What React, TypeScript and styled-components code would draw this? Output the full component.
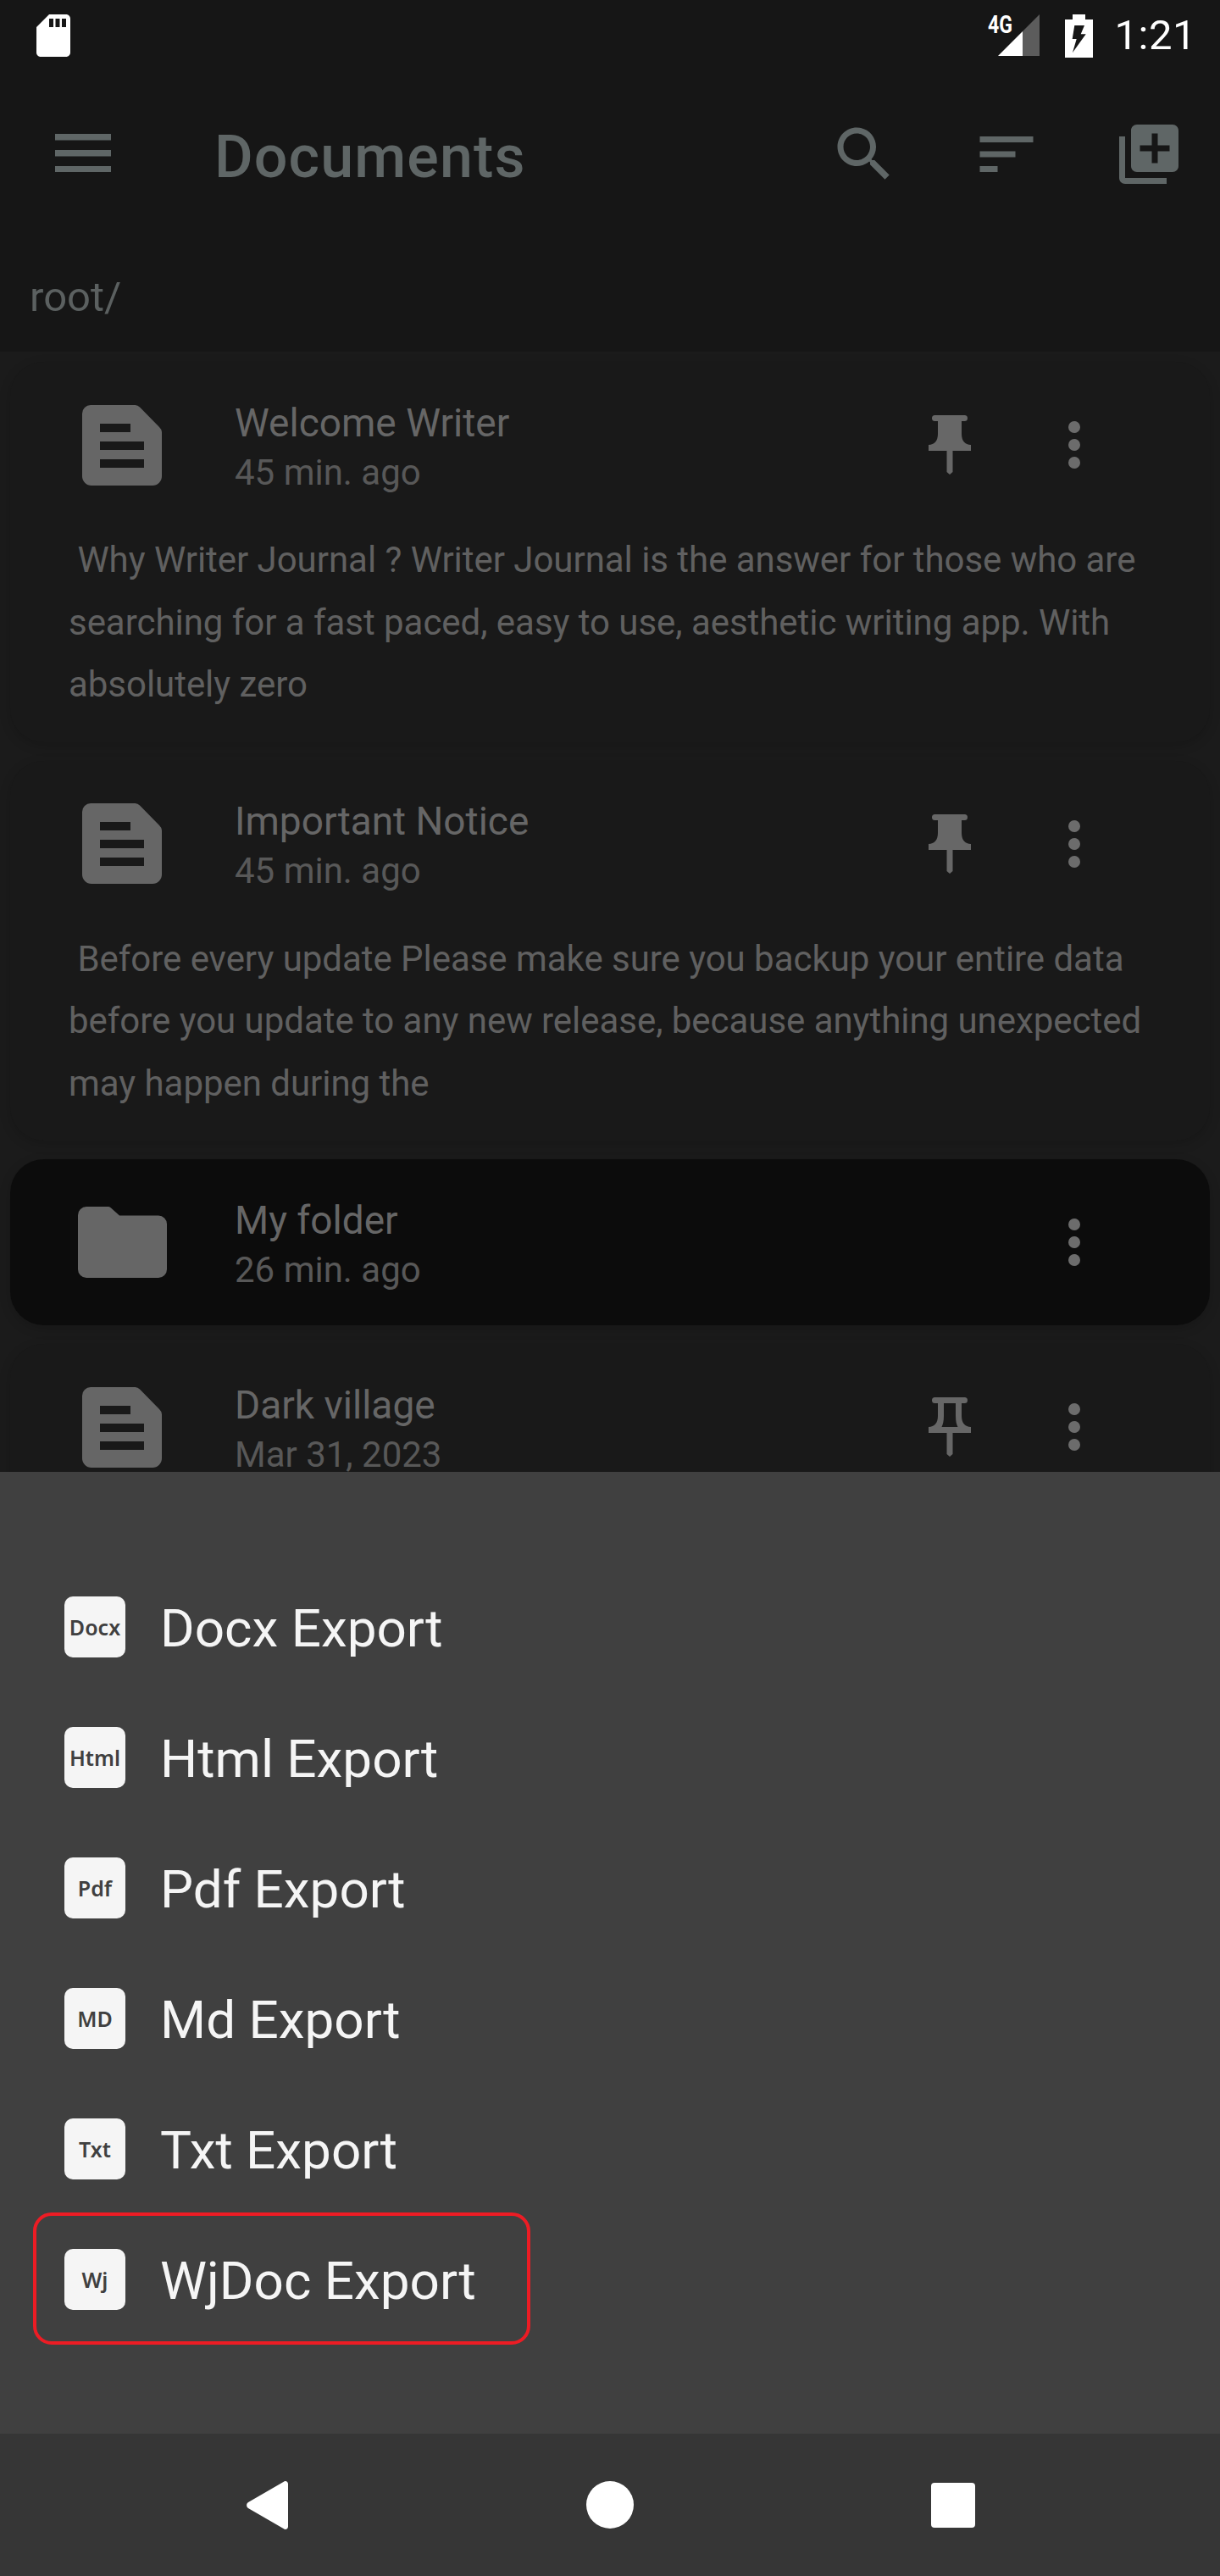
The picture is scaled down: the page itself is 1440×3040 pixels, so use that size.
import React from "react";
import styled, { createGlobalStyle } from "styled-components";

const Global = createGlobalStyle`
  html, body { margin: 0; padding: 0; background: #161616; }
  * { box-sizing: border-box; }
`;

const Phone = styled.div`
  width: 1440px;
  height: 3040px;
  display: flex;
  flex-direction: column;
  overflow: hidden;
  background: #161616;
  font-family: Roboto, "Liberation Sans", sans-serif;
`;

const StatusBar = styled.div`
  height: 84px;
  flex: none;
  display: flex;
  align-items: center;
  padding: 0 28px 0 33px;
  color: #fff;
`;
const StatusRight = styled.div`
  margin-left: auto;
  display: flex;
  align-items: center;
`;
const SignalIcon = styled.svg`
  display: block;
  overflow: visible;
  margin: -1px 30px 0 0;
`;
const BatteryIcon = styled.svg`
  display: block;
  margin-right: 26px;
`;
const Clock = styled.span`
  font-size: 49px;
  line-height: 84px;
  letter-spacing: 0.5px;
`;

const Toolbar = styled.div`
  height: 196px;
  flex: none;
  display: flex;
  align-items: center;
  color: #5f6666;
`;
const Burger = styled.svg`
  display: block;
  margin: -3px 0 0 65px;
`;
const Title = styled.h1`
  margin: 6px 0 0 122px;
  font-size: 70px;
  font-weight: 500;
  line-height: 84px;
  letter-spacing: 1.1px;
`;
const ToolActions = styled.div`
  margin-left: auto;
  display: flex;
`;
const ToolSlot = styled.div`
  width: 168px;
  height: 84px;
  display: flex;
  align-items: center;
  justify-content: center;
`;

const Breadcrumb = styled.div`
  height: 135px;
  flex: none;
  padding: 42px 0 0 35px;
  font-size: 49px;
  line-height: 58px;
  color: #5b6060;
`;

const List = styled.div`
  flex: 1;
  min-height: 0;
  overflow: hidden;
  background: #1b1b1b;
  padding: 12px 12px 0;
  display: flex;
  flex-direction: column;
  gap: 22px;
`;
const Card = styled.div<{ $folder?: boolean }>`
  flex: none;
  border-radius: 40px;
  background: ${(p) => (p.$folder ? "#0c0c0c" : "#191919")};
  box-shadow: 0 4px 14px rgba(0, 0, 0, 0.16);
  color: #636363;
`;
const CardHead = styled.div`
  height: 196px;
  display: flex;
  align-items: center;
  padding-right: 87px;
`;
const KindSlot = styled.div`
  width: 265px;
  padding-right: 1px;
  flex: none;
  display: flex;
  justify-content: center;
`;
const CardText = styled.div`
  flex: 1;
  min-width: 0;
  padding-top: 5px;
`;
const CardTitle = styled.div`
  font-size: 46px;
  line-height: 60px;
  color: #666;
`;
const CardTime = styled.div`
  font-size: 42px;
  line-height: 58px;
  color: #585858;
`;
const ActionSlot = styled.div`
  width: 147px;
  flex: none;
  display: flex;
  justify-content: center;
`;
const CardBody = styled.p`
  margin: 0;
  padding: 1px 70px 31px 69px;
  font-size: 42px;
  line-height: 73.5px;
  letter-spacing: -0.04px;
  white-space: pre-wrap;
  color: #606060;
`;

const Sheet = styled.div`
  flex: none;
  height: 1135px;
  background: #404040;
  padding: 106px 0 105px;
  display: flex;
  flex-direction: column;
`;
const ExportRow = styled.div<{ $marked?: boolean }>`
  position: relative;
  height: 154px;
  padding-left: 76px;
  display: flex;
  align-items: center;
  gap: 41px;
  ${(p) =>
    p.$marked &&
    `&::after {
      content: "";
      box-sizing: border-box;
      position: absolute;
      left: 39px;
      top: -2px;
      width: 587px;
      height: 156px;
      border: 4.5px solid #ed1c24;
      border-radius: 22px;
    }`}
`;
const ExportBadge = styled.span`
  width: 72px;
  height: 72px;
  flex: none;
  display: flex;
  align-items: center;
  justify-content: center;
  border-radius: 10px;
  background: #f5f5f5;
  color: #404040;
  font-family: "Noto Sans", "Open Sans", sans-serif;
  font-size: 25px;
  font-weight: 600;
`;
const ExportLabel = styled.span`
  margin-top: 3px;
  font-size: 62px;
  line-height: 74px;
  color: #f5f5f5;
`;

const NavBar = styled.div`
  flex: none;
  height: 168px;
  background: #363636;
  display: flex;
  align-items: center;
  justify-content: center;
`;
const NavSlot = styled.div`
  width: 405px;
  display: flex;
  justify-content: center;
`;

const Icon = styled.svg`
  display: block;
  fill: currentColor;
`;

const DocIcon = () => (
  <Icon width="94" height="95" viewBox="0 0 94 95" fill="#666" style={{ color: "#666" }}>
    <path
      fillRule="evenodd"
      d="M10 0H62a8 8 0 0 1 6 2.500L91 26a9 9 0 0 1 3 6V84a11 11 0 0 1-11 11H11A11 11 0 0 1 0 84V10A10 10 0 0 1 10 0ZM21 22V32H57V22ZM21 43V53H73V43ZM21 64V74H73V64Z"
    />
  </Icon>
);

const FolderIcon = () => (
  <Icon width="105" height="84" viewBox="0 0 105 84" style={{ color: "#666" }}>
    <path d="M10 0H36a4 4 0 0 1 3 1.500L49 10.500H95a10 10 0 0 1 10 10V74a10 10 0 0 1-10 10H10A10 10 0 0 1 0 74V10A10 10 0 0 1 10 0Z" />
  </Icon>
);

const PinIcon = ({ outline }: { outline?: boolean }) => (
  <Icon width="50" height="70" viewBox="0 0 50 70" style={{ color: "#676767" }}>
    <path
      fillRule="evenodd"
      d={
        "M7.500 0H42.500a3.500 3.500 0 0 1 0 7H39V22C39 30 43 35 50 35V42H28.500V67L25 70L21.500 67V42H0V35C7 35 11 30 11 22V7H7.500a3.500 3.500 0 0 1 0-7Z" +
        (outline ? "M18 7V22C18 28 17 32 15.500 35H34.500C33 32 32 28 32 22V7Z" : "")
      }
    />
  </Icon>
);

const DotsIcon = () => (
  <Icon width="14" height="56" viewBox="0 0 14 56" style={{ color: "#6c6c6c" }}>
    <circle cx="7" cy="7" r="7" />
    <circle cx="7" cy="28" r="7" />
    <circle cx="7" cy="49" r="7" />
  </Icon>
);

type DocCard = { title: string; time: string; body?: string; outline?: boolean };

const Doc = ({ title, time, body, outline }: DocCard) => (
  <Card>
    <CardHead>
      <KindSlot>
        <DocIcon />
      </KindSlot>
      <CardText>
        <CardTitle>{title}</CardTitle>
        <CardTime>{time}</CardTime>
      </CardText>
      <ActionSlot>
        <PinIcon outline={outline} />
      </ActionSlot>
      <ActionSlot>
        <DotsIcon />
      </ActionSlot>
    </CardHead>
    {body && <CardBody>{body}</CardBody>}
  </Card>
);

const exportsList = [
  { badge: "Docx", label: "Docx Export" },
  { badge: "Html", label: "Html Export" },
  { badge: "Pdf", label: "Pdf Export" },
  { badge: "MD", label: "Md Export" },
  { badge: "Txt", label: "Txt Export" },
  { badge: "Wj", label: "WjDoc Export", marked: true },
];

export default function App() {
  return (
    <Phone>
      <Global />
      <StatusBar>
        <Icon width="60" height="60" viewBox="0 0 24 24">
          <path d="M18 2h-8L4.020 8 4 20c0 1.100.9 2 2 2h12c1.100 0 2-.9 2-2V4c0-1.100-.9-2-2-2zm-6 6h-2V4h2v4zm3 0h-2V4h2v4zm3 0h-2V4h2v4z" />
        </Icon>
        <StatusRight>
          <SignalIcon width="61" height="49" viewBox="0 0 61 49">
            <polygon points="12,49 41,20 41,49" fill="#fff" />
            <polygon points="41,20 61,0 61,49 41,49" fill="#5c5c5c" />
            <text x="0" y="22" fill="#fff" fontFamily="Roboto, sans-serif" fontWeight="700" fontSize="29" textLength="29" lengthAdjust="spacingAndGlyphs">
              4G
            </text>
          </SignalIcon>
          <BatteryIcon width="33" height="51" viewBox="0 0 33 51">
            <path
              fill="#fff"
              fillRule="evenodd"
              d="M9 0H24V6H33V51H0V6H9ZM11.300 13L8.700 29H13.700L9 45L24.700 23.300H18.700L23 13Z"
            />
          </BatteryIcon>
          <Clock>1:21</Clock>
        </StatusRight>
      </StatusBar>

      <Toolbar>
        <Burger width="66" height="45" viewBox="0 0 66 45" fill="currentColor">
          <rect y="0" width="66" height="7.500" />
          <rect y="19" width="66" height="7.500" />
          <rect y="38" width="66" height="7" />
        </Burger>
        <Title>Documents</Title>
        <ToolActions>
          <ToolSlot>
            <Icon width="84" height="84" viewBox="0 0 24 24">
              <path d="M15.500 14h-.79l-.28-.27C15.410 12.590 16 11.110 16 9.500 16 5.910 13.090 3 9.500 3S3 5.910 3 9.500 5.910 16 9.500 16c1.610 0 3.090-.59 4.230-1.570l.27.28v.79l5 4.990L20.490 19l-4.990-5zm-6 0C7.010 14 5 11.990 5 9.500S7.010 5 9.500 5 14 7.010 14 9.500 11.990 14 9.500 14z" />
            </Icon>
          </ToolSlot>
          <ToolSlot>
            <Icon width="84" height="84" viewBox="0 0 24 24">
              <path d="M3 18h6v-2H3v2zM3 6v2h18V6H3zm0 7h12v-2H3v2z" />
            </Icon>
          </ToolSlot>
          <ToolSlot>
            <Icon width="84" height="84" viewBox="0 0 24 24">
              <path d="M4 6H2v14c0 1.100.9 2 2 2h14v-2H4V6zm16-4H8c-1.100 0-2 .9-2 2v12c0 1.100.9 2 2 2h12c1.100 0 2-.9 2-2V4c0-1.100-.9-2-2-2zm-1 9h-4v4h-2v-4H9V9h4V5h2v4h4v2z" />
            </Icon>
          </ToolSlot>
        </ToolActions>
      </Toolbar>

      <Breadcrumb>root/</Breadcrumb>

      <List>
        <Doc
          title="Welcome Writer"
          time="45 min. ago"
          body=" Why Writer Journal ? Writer Journal is the answer for those who are searching for a fast paced, easy to use, aesthetic writing app. With absolutely zero"
        />
        <Doc
          title="Important Notice"
          time="45 min. ago"
          body=" Before every update Please make sure you backup your entire data before you update to any new release, because anything unexpected may happen during the"
        />
        <Card $folder>
          <CardHead>
            <KindSlot>
              <FolderIcon />
            </KindSlot>
            <CardText>
              <CardTitle>My folder</CardTitle>
              <CardTime>26 min. ago</CardTime>
            </CardText>
            <ActionSlot>
              <DotsIcon />
            </ActionSlot>
          </CardHead>
        </Card>
        <Doc title="Dark village" time="Mar 31, 2023" outline />
      </List>

      <Sheet>
        {exportsList.map((item) => (
          <ExportRow key={item.label} $marked={item.marked}>
            <ExportBadge>{item.badge}</ExportBadge>
            <ExportLabel>{item.label}</ExportLabel>
          </ExportRow>
        ))}
      </Sheet>

      <NavBar>
        <NavSlot>
          <svg width="49" height="57" viewBox="0 0 49 57" style={{ display: "block" }}>
            <path fill="#fff" d="M49 3.500V53.500C49 56.500 46 58 43.500 56L2 32C-.5 30.500-.5 26.500 2 25L43.500 1C46-1 49 .5 49 3.500Z" />
          </svg>
        </NavSlot>
        <NavSlot>
          <svg width="56" height="56" viewBox="0 0 56 56" style={{ display: "block" }}>
            <circle cx="28" cy="28" r="28" fill="#fff" />
          </svg>
        </NavSlot>
        <NavSlot>
          <svg width="52" height="53" viewBox="0 0 52 53" style={{ display: "block" }}>
            <rect width="52" height="53" rx="4" fill="#fff" />
          </svg>
        </NavSlot>
      </NavBar>
    </Phone>
  );
}
